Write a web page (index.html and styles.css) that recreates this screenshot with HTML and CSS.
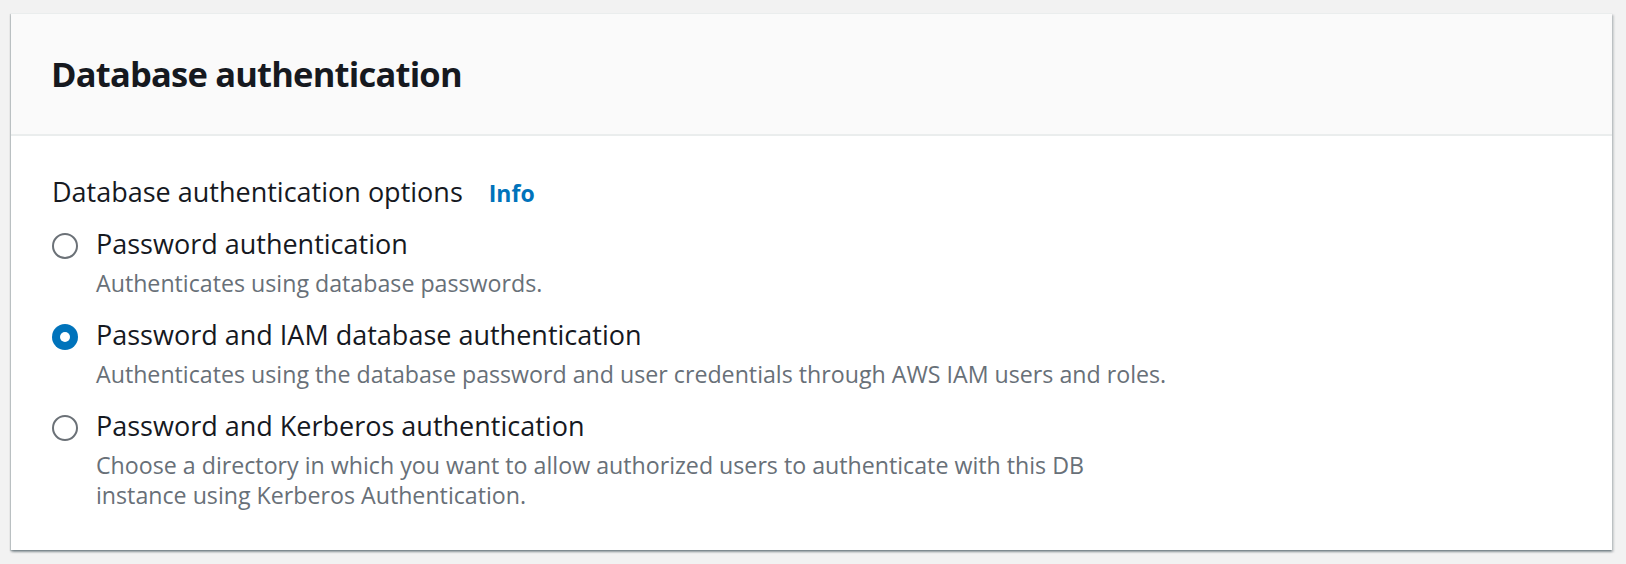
FILE: index.html
```html
<!DOCTYPE html>
<html>
<head>
    <link rel="stylesheet" href="styles.css">
</head>
<body>
    <section class="panel">
        <header class="panel-header">
            <h2>Database authentication</h2>
        </header>
        <div class="panel-body">
            <div class="field-label">
                <span>Database authentication options</span>
                <a class="info-link" href="#">Info</a>
            </div>
            <div class="radio-group">
                <label class="radio-option">
                    <span class="radio"></span>
                    <span class="option-text">
                        <span class="option-label">Password authentication</span>
                        <span class="option-desc">Authenticates using database passwords.</span>
                    </span>
                </label>
                <label class="radio-option">
                    <span class="radio checked"></span>
                    <span class="option-text">
                        <span class="option-label">Password and IAM database authentication</span>
                        <span class="option-desc">Authenticates using the database password and user credentials through AWS IAM users and roles.</span>
                    </span>
                </label>
                <label class="radio-option">
                    <span class="radio"></span>
                    <span class="option-text">
                        <span class="option-label">Password and Kerberos authentication</span>
                        <span class="option-desc narrow">Choose a directory in which you want to allow authorized users to authenticate with this DB instance using Kerberos Authentication.</span>
                    </span>
                </label>
            </div>
        </div>
    </section>
</body>
</html>
```

FILE: styles.css
```css
:root {
    --text-dark: #16191f;
    --text-muted: #687078;
    --link-blue: #0073bb;
    --page-bg: #f2f2f2;
    --header-bg: #fafafa;
    --divider: #eaeded;
}

body {
    margin: 0;
    padding: 13px 14px 11px 11px;
    font-family: 'Open Sans', 'Noto Sans', sans-serif;
    background: var(--page-bg);
    color: var(--text-dark);
}

.panel {
    background: white;
    border-top: 1px solid var(--divider);
    box-shadow: 0 2px 2px 0 rgba(0, 28, 36, 0.3),
                2px 2px 2px 0 rgba(0, 28, 36, 0.15),
                -1px 1px 1px 0 rgba(0, 28, 36, 0.15);
}

.panel-header {
    height: 120px;
    display: flex;
    align-items: center;
    padding: 0 40px;
    background: var(--header-bg);
    border-bottom: 2px solid var(--divider);
}

.panel-header h2 {
    margin: 0;
    font-size: 34.5px;
    font-weight: 700;
    letter-spacing: -0.8px;
    line-height: 44px;
}

.panel-body {
    padding: 38px 40px 40px 41px;
}

.field-label {
    display: flex;
    align-items: baseline;
    gap: 26px;
    font-size: 27px;
    line-height: 36px;
}

.info-link {
    color: var(--link-blue);
    font-size: 23px;
    font-weight: 700;
    text-decoration: none;
}

.radio-group {
    display: flex;
    flex-direction: column;
    gap: 19px;
    margin-top: 15px;
}

.radio-option {
    display: flex;
    align-items: flex-start;
    gap: 18px;
}

.radio {
    flex: none;
    box-sizing: border-box;
    width: 26px;
    height: 26px;
    margin-top: 7px;
    border: 2px solid #6b7177;
    border-radius: 50%;
    background: white;
    position: relative;
}

.radio.checked {
    border: none;
    background: var(--link-blue);
}

.radio.checked::after {
    content: '';
    position: absolute;
    top: 8px;
    left: 8px;
    width: 10px;
    height: 10px;
    border-radius: 50%;
    background: white;
}

.option-text {
    display: flex;
    flex-direction: column;
}

.option-label {
    font-size: 27px;
    line-height: 36px;
}

.option-desc {
    margin-top: 6px;
    font-size: 23.2px;
    line-height: 30px;
    color: var(--text-muted);
}

.option-desc.narrow {
    max-width: 1040px;
}
```
